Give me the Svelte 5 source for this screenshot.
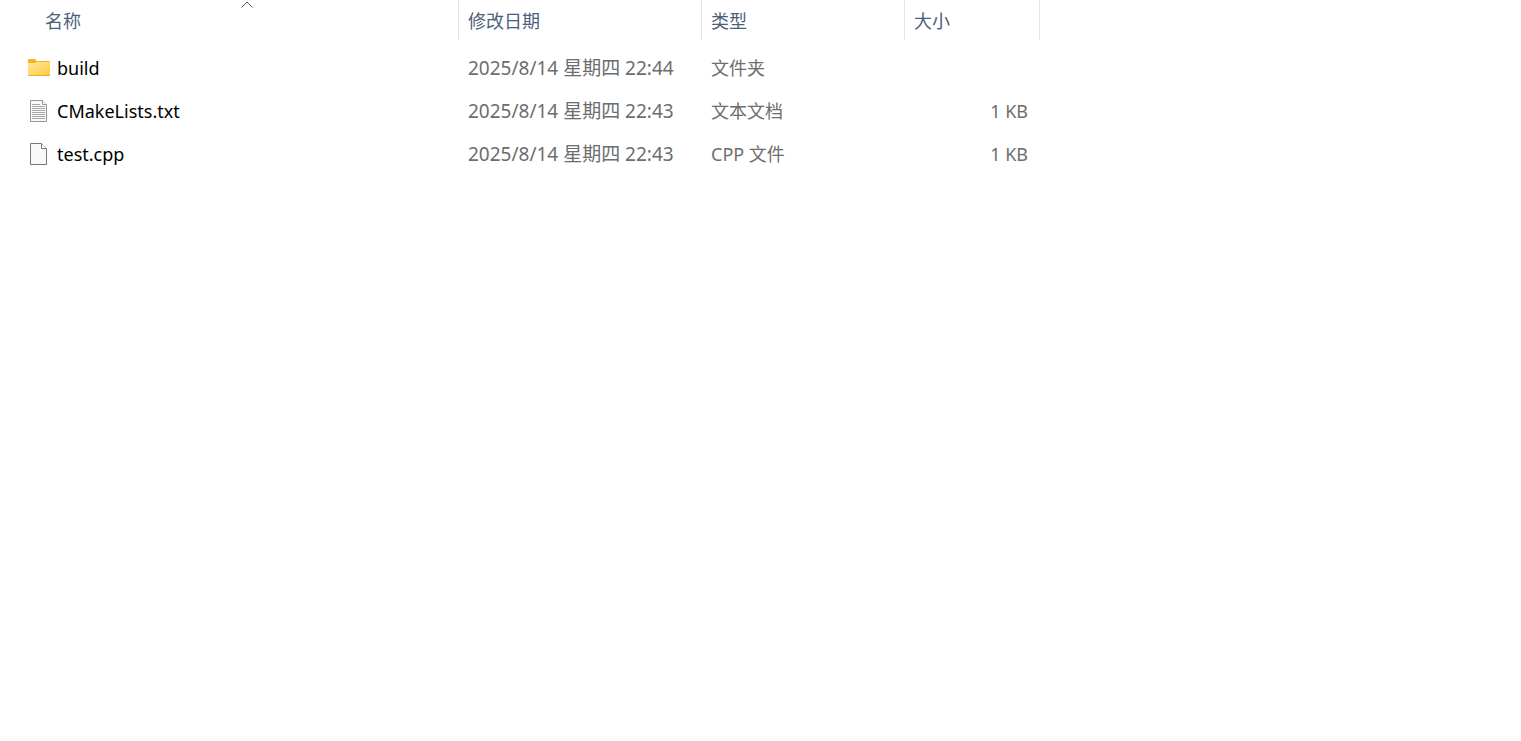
<script>
  const columns = [
    { key: "name", label: "名称" },
    { key: "modified", label: "修改日期" },
    { key: "type", label: "类型" },
    { key: "size", label: "大小" },
  ];

  const files = [
    { icon: "folder", name: "build", modified: "2025/8/14 星期四 22:44", type: "文件夹", size: "" },
    { icon: "text", name: "CMakeLists.txt", modified: "2025/8/14 星期四 22:43", type: "文本文档", size: "1 KB" },
    { icon: "file", name: "test.cpp", modified: "2025/8/14 星期四 22:43", type: "CPP 文件", size: "1 KB" },
  ];

  let sortKey = $state("name");
</script>

<main>
  <table>
    <colgroup>
      {#each columns as column}
        <col class={column.key} />
      {/each}
    </colgroup>
    <thead>
      <tr>
        {#each columns as column}
          <th class={column.key} aria-sort={sortKey === column.key ? "ascending" : "none"}>
            <button onclick={() => (sortKey = column.key)}>
              {column.label}
              {#if sortKey === column.key}
                <svg class="caret" viewBox="0 0 12 7" aria-hidden="true">
                  <path d="M.5 6.5 6 1l5.500 5.500" fill="none" stroke="#5a5a5a" />
                </svg>
              {/if}
            </button>
          </th>
        {/each}
      </tr>
    </thead>
    <tbody>
      {#each files as file}
        <tr>
          <td class="name">
            <div class="file">
              <svg class="icon" viewBox="0 0 24 24" aria-hidden="true">
                {#if file.icon === "folder"}
                  <defs>
                    <linearGradient id="folder-fill" x1="0" y1="0" x2="1" y2="1">
                      <stop offset="0" stop-color="#ffe8a0" />
                      <stop offset="1" stop-color="#ffc83c" />
                    </linearGradient>
                  </defs>
                  <path d="M1 4a1 1 0 0 1 1-1h6l1.500 2H22a1 1 0 0 1 1 1v4H1z" fill="#f5b61c" />
                  <path d="M1 7h7l1.500-1H23v13a1 1 0 0 1-1 1H2a1 1 0 0 1-1-1z" fill="url(#folder-fill)" />
                  <path d="M1 19h22a1 1 0 0 1-1 1H2a1 1 0 0 1-1-1z" fill="#efaa22" />
                {:else if file.icon === "text"}
                  <path d="M3.500 1.500h12l4 4v17h-16z" fill="#f8f8f8" stroke="#979797" />
                  <path d="M15.500 1.500v4h4" fill="#fff" stroke="#979797" />
                  <path d="M5 5.500h8M5 7.500h13M5 9.500h13M5 11.500h13M5 13.500h13M5 15.500h13M5 17.500h13M5 19.500h13" stroke="#a9a9a9" />
                {:else}
                  <path d="M3.500 1.500h11l5 5v16h-16z" fill="#f9f9f9" stroke="#797774" />
                  <path d="M14.500 1.500v5h5" fill="#fff" stroke="#797774" />
                {/if}
              </svg>
              <span>{file.name}</span>
            </div>
          </td>
          <td class="modified">{file.modified}</td>
          <td class="type">{file.type}</td>
          <td class="size">{file.size}</td>
        </tr>
      {/each}
    </tbody>
  </table>
</main>

<style>
  :global(body) {
    margin: 0;
    background: #fff;
  }
  main {
    font-family: "Noto Sans", "Noto Sans CJK SC", sans-serif;
    font-size: 18px;
    line-height: 24px;
    color: #6d6d6d;
    overflow-x: auto;
  }
  table {
    table-layout: fixed;
    width: 1040px;
    border-collapse: separate;
    border-spacing: 0;
  }
  col.name {
    width: 459px;
  }
  col.modified {
    width: 243px;
  }
  col.type {
    width: 203px;
  }
  th {
    box-sizing: border-box;
    height: 40px;
    padding: 0;
    border-right: 1px solid #e5e5e5;
    font-weight: 400;
  }
  th.name {
    padding-left: 36px;
  }
  button {
    position: relative;
    display: block;
    width: 100%;
    height: 40px;
    padding: 2px 9px 0;
    border: 0;
    background: none;
    font: inherit;
    color: #4c607a;
    text-align: left;
  }
  .caret {
    position: absolute;
    top: 1px;
    left: 50%;
    width: 12px;
    height: 7px;
    margin-left: -6px;
  }
  td {
    height: 43px;
    padding: 0 12px 0 9px;
    white-space: nowrap;
  }
  tbody::before {
    content: "";
    display: block;
    height: 6px;
  }
  td.name {
    padding-left: 27px;
    color: #000;
  }
  td.modified {
    font-size: 19px;
  }
  td.size {
    text-align: right;
  }
  .file {
    display: flex;
    align-items: center;
    gap: 6px;
  }
  .icon {
    width: 24px;
    height: 24px;
    flex: none;
  }
</style>
